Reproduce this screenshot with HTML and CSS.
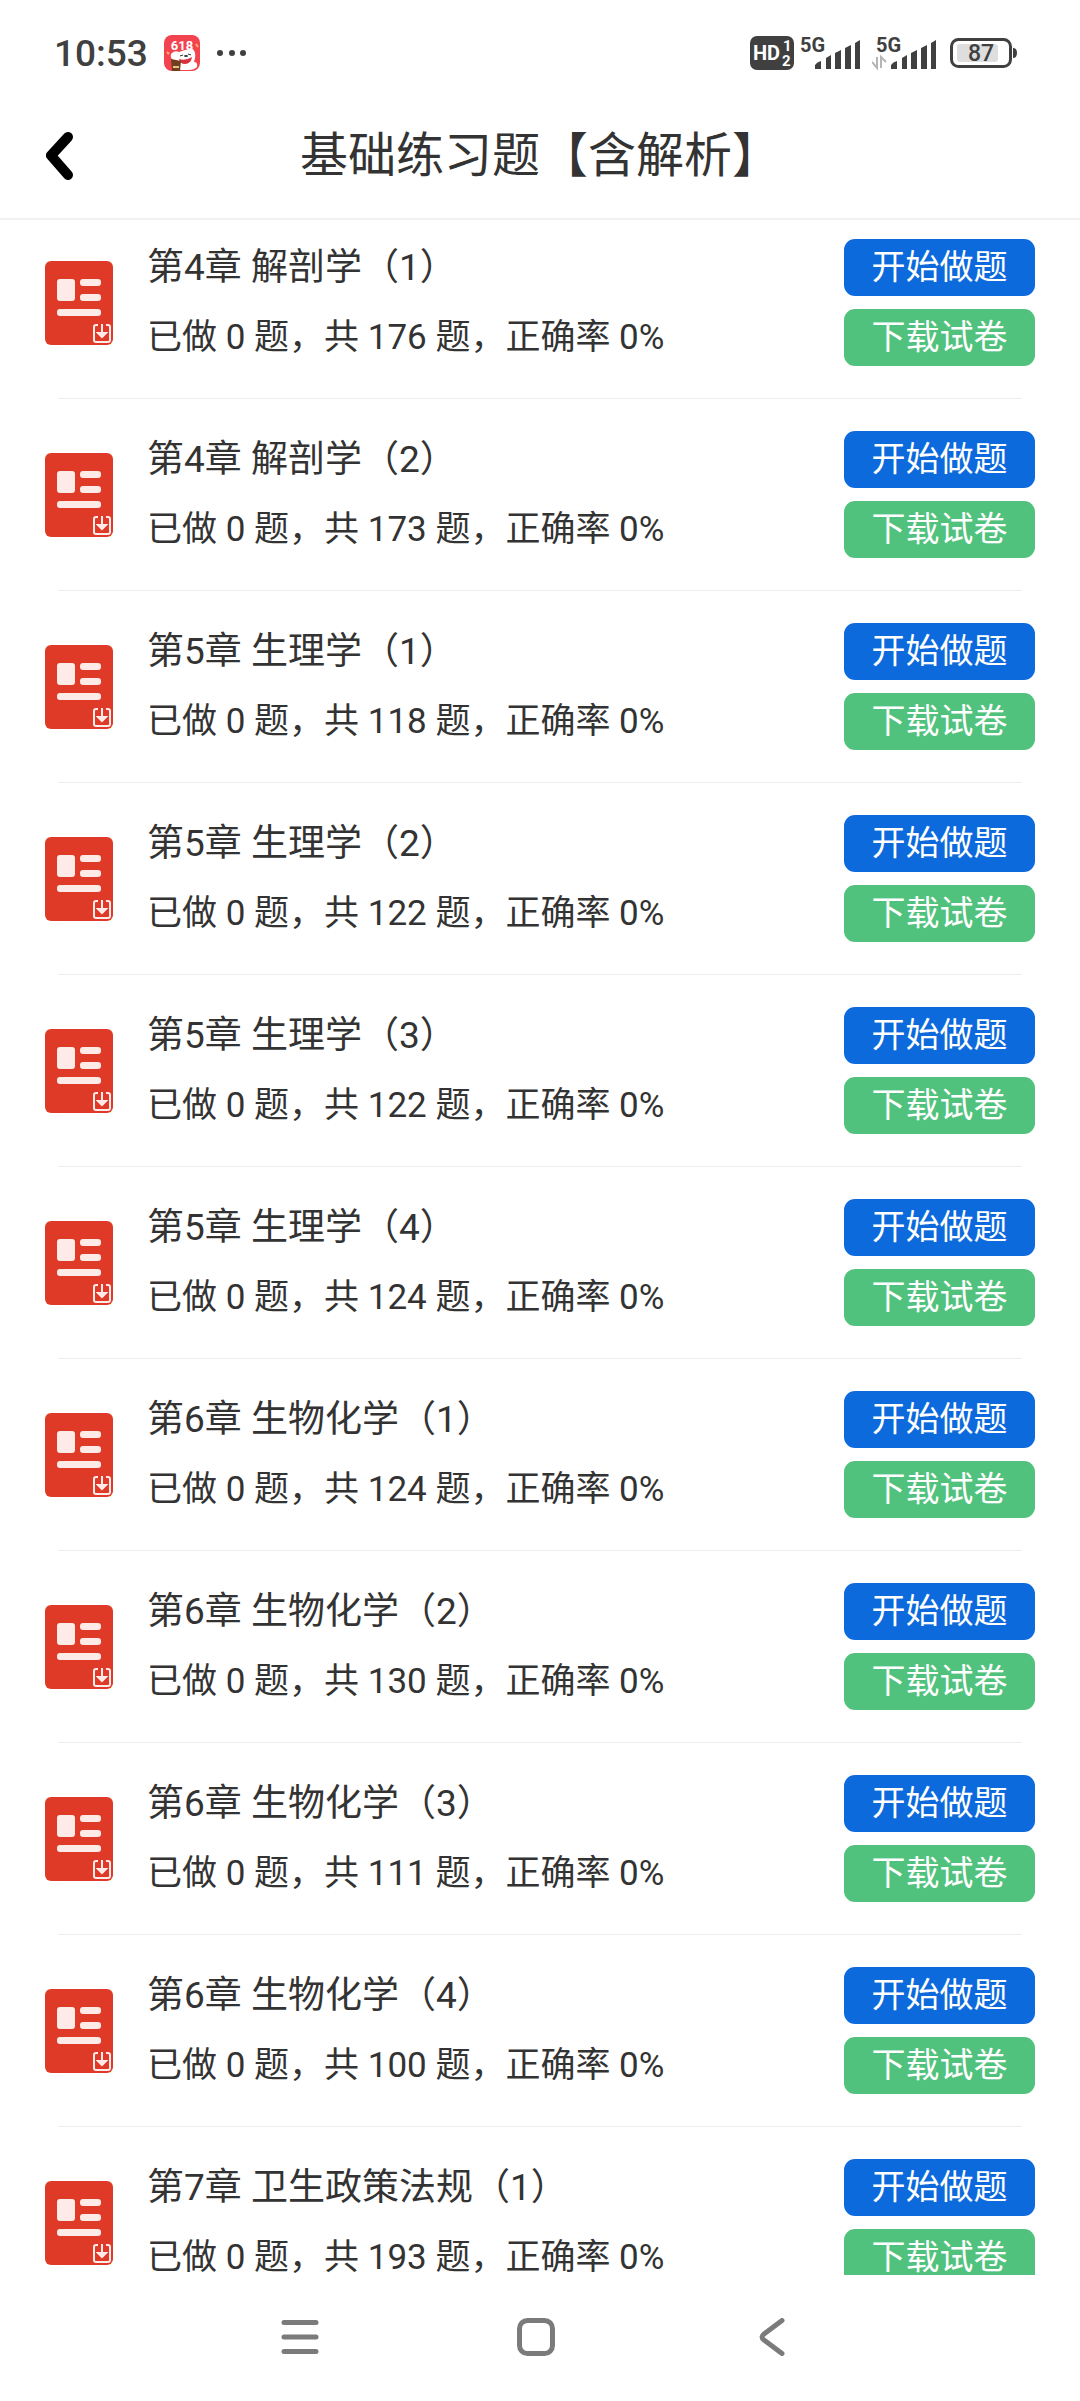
FILE: index.html
```
<!DOCTYPE html>
<html lang="zh-CN">
<head>
    <meta charset="UTF-8">
    <meta name="viewport" content="width=device-width, initial-scale=1">
    <title>基础练习题【含解析】</title>
    <link rel="stylesheet" href="styles.css">
</head>
<body>
<!-- shared icons -->
<svg class="sprite" aria-hidden="true">
    <symbol id="paper" viewBox="0 0 68 84">
        <rect width="68" height="84" rx="6" fill="#df3a27"/>
        <g fill="#feebe8">
            <rect x="12" y="18" width="18" height="22" rx="3"/>
            <rect x="35" y="18" width="21" height="7" rx="3"/>
            <rect x="35" y="33" width="21" height="7" rx="3"/>
            <rect x="12" y="48" width="44" height="7" rx="3"/>
        </g>
        <g fill="none" stroke="#feebe8" stroke-width="2">
            <path d="M53 64h-2q-2 0-2 2v13q0 2 2 2h12q2 0 2-2V66q0-2-2-2h-2M57 63v12"/>
            <path d="M53 72l4 4 4-4z" fill="#feebe8"/>
        </g>
    </symbol>
    <symbol id="bars" viewBox="0 0 46 30">
        <path d="M0 29v-4q2-3 6-4v8zM11 29V18l5-3v14zM20 29V13l6-3v19zM30 29V8l6-3v24zM40 29V3l5-3v29z" fill="#404040"/>
    </symbol>
</svg>

<div class="status">
    <span class="time">10:53</span>
    <svg class="app" width="36" height="36" viewBox="0 0 36 36">
        <rect width="36" height="36" rx="8" fill="#f2434f"/>
        <path d="M7 19q3-4 8-2l6-2 8-1q4 5 1 13 4 0 3 5-3 3-8 3H13q-6-3-4-10-3-2-2-6z" fill="#fff"/>
        <path d="M15 24q7 2 13-2-1 7-7 7-5 0-6-5z" fill="#d8303c"/>
        <path d="M16 21l3-1M24 19l3 1" stroke="#333" stroke-width="1"/>
        <ellipse cx="22" cy="21" rx="2" ry="1" fill="#333"/>
        <path d="M7 24l10 2-1 10H8z" fill="#70401c"/>
        <path d="M9 32h6" stroke="#e9c383" stroke-width="2"/>
        <path d="M3 17l2 2M32 9l2 3" stroke="#ffb070" stroke-width="2"/>
        <text x="18" y="15" text-anchor="middle" class="app-text">618</text>
    </svg>
    <svg class="dots" width="30" height="6" viewBox="0 0 30 6" fill="#404040">
        <circle cx="3" cy="3" r="3"/><circle cx="15" cy="3" r="3"/><circle cx="26" cy="3" r="3"/>
    </svg>
    <svg class="hd" width="44" height="34" viewBox="0 0 44 34">
        <rect width="44" height="34" rx="7" fill="#404040"/>
        <text x="3" y="24" class="hd-text">HD</text>
        <text x="33" y="15" class="hd-num">1</text>
        <text x="32" y="30" class="hd-num">2</text>
    </svg>
    <svg class="signal" width="62" height="42" viewBox="0 -4 62 42">
        <text x="0" y="16" class="net">5G</text>
        <use href="#bars" x="15" y="4" width="46" height="30"/>
    </svg>
    <svg class="signal" width="66" height="42" viewBox="0 -4 66 42">
        <text x="4" y="16" class="net">5G</text>
        <path d="M0 26l5 6V21M9 32V21l5 5" fill="none" stroke="#b5b5b5" stroke-width="2"/>
        <use href="#bars" x="19" y="4" width="46" height="30"/>
    </svg>
    <svg class="battery" width="68" height="30" viewBox="0 0 68 30">
        <rect x="1.5" y="1.5" width="59" height="27" rx="7" fill="none" stroke="#404040" stroke-width="3"/>
        <rect x="7" y="6" width="41" height="18" rx="3" fill="#dedede"/>
        <path d="M63 10q4 0 4 5t-4 5z" fill="#404040"/>
        <text x="31" y="23" text-anchor="middle" class="level">87</text>
    </svg>
</div>

<header class="header">
    <button class="back" aria-label="返回">
        <svg width="28" height="48" viewBox="0 0 28 48">
            <path d="M22 5L5 23.5L22 43" fill="none" stroke="#000" stroke-width="10" stroke-linecap="round" stroke-linejoin="round"/>
        </svg>
    </button>
    <h1>基础练习题【含解析】</h1>
</header>

<main class="list">
    <div class="item">
        <svg class="paper"><use href="#paper"/></svg>
        <div class="info"><h2>第4章 解剖学（1）</h2><p>已做 0 题，共 176 题，正确率 0%</p></div>
        <div class="actions"><button class="btn start">开始做题</button><button class="btn download">下载试卷</button></div>
    </div>
    <div class="item">
        <svg class="paper"><use href="#paper"/></svg>
        <div class="info"><h2>第4章 解剖学（2）</h2><p>已做 0 题，共 173 题，正确率 0%</p></div>
        <div class="actions"><button class="btn start">开始做题</button><button class="btn download">下载试卷</button></div>
    </div>
    <div class="item">
        <svg class="paper"><use href="#paper"/></svg>
        <div class="info"><h2>第5章 生理学（1）</h2><p>已做 0 题，共 118 题，正确率 0%</p></div>
        <div class="actions"><button class="btn start">开始做题</button><button class="btn download">下载试卷</button></div>
    </div>
    <div class="item">
        <svg class="paper"><use href="#paper"/></svg>
        <div class="info"><h2>第5章 生理学（2）</h2><p>已做 0 题，共 122 题，正确率 0%</p></div>
        <div class="actions"><button class="btn start">开始做题</button><button class="btn download">下载试卷</button></div>
    </div>
    <div class="item">
        <svg class="paper"><use href="#paper"/></svg>
        <div class="info"><h2>第5章 生理学（3）</h2><p>已做 0 题，共 122 题，正确率 0%</p></div>
        <div class="actions"><button class="btn start">开始做题</button><button class="btn download">下载试卷</button></div>
    </div>
    <div class="item">
        <svg class="paper"><use href="#paper"/></svg>
        <div class="info"><h2>第5章 生理学（4）</h2><p>已做 0 题，共 124 题，正确率 0%</p></div>
        <div class="actions"><button class="btn start">开始做题</button><button class="btn download">下载试卷</button></div>
    </div>
    <div class="item">
        <svg class="paper"><use href="#paper"/></svg>
        <div class="info"><h2>第6章 生物化学（1）</h2><p>已做 0 题，共 124 题，正确率 0%</p></div>
        <div class="actions"><button class="btn start">开始做题</button><button class="btn download">下载试卷</button></div>
    </div>
    <div class="item">
        <svg class="paper"><use href="#paper"/></svg>
        <div class="info"><h2>第6章 生物化学（2）</h2><p>已做 0 题，共 130 题，正确率 0%</p></div>
        <div class="actions"><button class="btn start">开始做题</button><button class="btn download">下载试卷</button></div>
    </div>
    <div class="item">
        <svg class="paper"><use href="#paper"/></svg>
        <div class="info"><h2>第6章 生物化学（3）</h2><p>已做 0 题，共 111 题，正确率 0%</p></div>
        <div class="actions"><button class="btn start">开始做题</button><button class="btn download">下载试卷</button></div>
    </div>
    <div class="item">
        <svg class="paper"><use href="#paper"/></svg>
        <div class="info"><h2>第6章 生物化学（4）</h2><p>已做 0 题，共 100 题，正确率 0%</p></div>
        <div class="actions"><button class="btn start">开始做题</button><button class="btn download">下载试卷</button></div>
    </div>
    <div class="item">
        <svg class="paper"><use href="#paper"/></svg>
        <div class="info"><h2>第7章 卫生政策法规（1）</h2><p>已做 0 题，共 193 题，正确率 0%</p></div>
        <div class="actions"><button class="btn start">开始做题</button><button class="btn download">下载试卷</button></div>
    </div>
</main>

<nav class="navbar">
    <button aria-label="菜单">
        <svg width="38" height="38" viewBox="0 0 38 38"><path d="M3 4.500h32M3 19h32M3 33.500h32"/></svg>
    </button>
    <button aria-label="主页">
        <svg width="38" height="38" viewBox="0 0 38 38"><rect x="2.500" y="2.500" width="33" height="33" rx="8"/></svg>
    </button>
    <button aria-label="后退">
        <svg width="38" height="38" viewBox="0 0 38 38"><path d="M29 2.500L11 16Q7 19 11 22L29 35.500"/></svg>
    </button>
</nav>
</body>
</html>
```
FILE: styles.css
```
* {
    box-sizing: border-box;
    margin: 0;
    padding: 0;
}
body {
    display: flex;
    flex-direction: column;
    height: 100vh;
    background: #fff;
    color: #333;
    font-family: Roboto, "Noto Sans CJK SC", sans-serif;
}
button {
    border: none;
    background: none;
    font-family: inherit;
    cursor: pointer;
}
.sprite {
    display: none;
}

/* status bar */
.status {
    display: flex;
    align-items: center;
    height: 106px;
    padding: 0 62px 0 54px;
    color: #404040;
}
.time {
    font-size: 37px;
    font-weight: 500;
}
.app {
    margin-left: 16px;
}
.dots {
    margin-left: 17px;
}
.hd {
    margin-left: auto;
}
.signal {
    margin-left: 6px;
}
.signal + .signal {
    margin-left: 10px;
}
.battery {
    margin-left: 12px;
}
.app-text {
    font-size: 13px;
    font-weight: 700;
    fill: #fff;
}
.hd-text {
    font-size: 20px;
    font-weight: 700;
    fill: #fff;
}
.hd-num {
    font-size: 15px;
    font-weight: 700;
    fill: #fff;
}
.net {
    font-size: 20px;
    font-weight: 700;
    fill: #404040;
}
.level {
    font-size: 23px;
    font-weight: 500;
    fill: #404040;
}

/* page header */
.header {
    display: grid;
    grid-template-columns: 28px 1fr 28px;
    align-items: center;
    height: 114px;
    padding: 0 46px 12px;
    border-bottom: 2px solid #f2f2f2;
}
.header h1 {
    font-size: 48px;
    font-weight: 400;
    line-height: 60px;
    text-align: center;
}
.back svg {
    display: block;
}

/* paper list */
.list {
    flex: 1;
    min-height: 0;
    overflow: hidden;
}
.item {
    display: flex;
    align-items: center;
    padding: 31px 45px;
    background: linear-gradient(#eee, #eee) center bottom / calc(100% - 116px) 1px no-repeat;
    border-bottom: 1px solid transparent;
    background-origin: border-box;
}
.item:first-child {
    padding-top: 18px;
}
.paper {
    flex: none;
    width: 68px;
    height: 84px;
}
.info {
    flex: 1;
    margin-left: 34px;
}
.info h2 {
    margin-bottom: 11px;
    font-size: 37px;
    font-weight: 400;
    line-height: 60px;
}
.info p {
    font-size: 35px;
    line-height: 58px;
}
.actions {
    display: flex;
    flex-direction: column;
    gap: 13px;
    width: 191px;
}
.btn {
    height: 57px;
    border-radius: 11px;
    color: #fff;
    font-size: 34px;
    line-height: 57px;
}
.start {
    background: #0c6adc;
}
.download {
    background: #50c27d;
}

/* system navigation */
.navbar {
    display: flex;
    justify-content: center;
    height: 126px;
    padding-right: 8px;
}
.navbar button {
    width: 236px;
}
.navbar svg {
    fill: none;
    stroke: #7b7b7b;
    stroke-width: 5;
    stroke-linecap: round;
}
```
